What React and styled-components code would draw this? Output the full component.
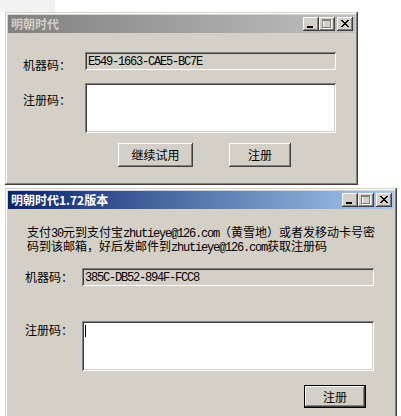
import React from "react";
import styled, { createGlobalStyle } from "styled-components";

const GlobalStyle = createGlobalStyle`
  html, body {
    margin: 0;
    padding: 0;
    background: #fff;
  }
  body {
    font-family: "Noto Sans CJK SC", "Noto Sans", sans-serif;
    font-size: 12px;
    color: #000;
    overflow: hidden;
  }
`;

const Desktop = styled.div`
  width: 401px;
  height: 416px;
  box-sizing: border-box;
  padding: 12px 0 0 5px;
  display: flex;
  flex-direction: column;
  gap: 3px;
  background: linear-gradient(#f2f2f2, #f2f2f2) no-repeat 0 0 / 55px 12px, #fff;
  overflow: hidden;
`;

/* classic raised 3d frame */
const raised = `
  box-shadow: inset -1px -1px #404040, inset 1px 1px #fff,
    inset -2px -2px #808080, inset 2px 2px #d4d0c8;
`;

const Window = styled.div`
  width: ${({ $w }) => $w}px;
  height: ${({ $h }) => $h}px;
  flex-shrink: 0;
  box-sizing: border-box;
  padding: 3px;
  background: #d4d0c8;
  box-shadow: inset -1px -1px #404040, inset 1px 1px #d4d0c8,
    inset -2px -2px #808080, inset 2px 2px #fff;
  display: flex;
  flex-direction: column;
`;

const TitleBar = styled.div`
  height: 18px;
  flex-shrink: 0;
  display: flex;
  align-items: center;
  padding: 0 2px 0 3px;
  background: ${({ $active }) =>
    $active
      ? "linear-gradient(to right, #0a246a, #a6caf0)"
      : "linear-gradient(to right, #808080, #c0c0c0)"};
  color: ${({ $active }) => ($active ? "#fff" : "#d4d0c8")};
`;

const TitleText = styled.span`
  font-weight: 700;
  font-size: 12px;
  line-height: 12px;
  white-space: nowrap;
`;

const CaptionGroup = styled.div`
  margin-left: auto;
  display: flex;
  align-items: center;
`;

const CaptionButton = styled.div`
  width: 16px;
  height: 14px;
  margin-left: ${({ $gap }) => $gap || 0}px;
  background: #d4d0c8;
  ${raised}
  svg {
    display: block;
  }
`;

const MinIcon = () => (
  <svg width="16" height="14" shapeRendering="crispEdges">
    <rect x="4" y="9" width="6" height="2" fill="#000" />
  </svg>
);

const MaxIcon = () => (
  <svg width="16" height="14" shapeRendering="crispEdges">
    <g fill="none" stroke="#fff">
      <rect x="4.5" y="3.5" width="8" height="8" />
    </g>
    <g fill="none" stroke="#808080">
      <rect x="3.5" y="2.5" width="8" height="8" />
      <line x1="3" y1="3.5" x2="12" y2="3.5" />
    </g>
  </svg>
);

const CloseIcon = () => {
  const cells = [];
  for (let i = 0; i < 7; i++) {
    cells.push(<rect key={"a" + i} x={4 + i} y={3 + i} width="2" height="1" />);
    cells.push(<rect key={"b" + i} x={10 - i} y={3 + i} width="2" height="1" />);
  }
  return (
    <svg width="16" height="14" shapeRendering="crispEdges" fill="#000">
      {cells}
    </svg>
  );
};

const Captions = () => (
  <CaptionGroup>
    <CaptionButton>
      <MinIcon />
    </CaptionButton>
    <CaptionButton>
      <MaxIcon />
    </CaptionButton>
    <CaptionButton $gap={2}>
      <CloseIcon />
    </CaptionButton>
  </CaptionGroup>
);

const Body = styled.div`
  flex: 1;
  display: flex;
  flex-direction: column;
  padding: ${({ $pad }) => $pad};
`;

const Form = styled.div`
  display: grid;
  grid-template-columns: ${({ $labelW }) => $labelW}px max-content;
  row-gap: ${({ $rowGap }) => $rowGap}px;
  align-items: start;
  margin-top: ${({ $top }) => $top || 0}px;
`;

const Label = styled.div`
  line-height: 12px;
  padding-top: ${({ $top }) => $top}px;
  white-space: nowrap;
`;

const Field = styled.div`
  width: ${({ $w }) => $w}px;
  height: ${({ $h }) => $h}px;
  box-sizing: border-box;
  padding: 4px 3px;
  background: ${({ $readOnly }) => ($readOnly ? "#d4d0c8" : "#fff")};
  box-shadow: inset 1px 1px #808080, inset -1px -1px #fff,
    inset 2px 2px #404040, inset -2px -2px #d4d0c8;
  font-family: "Liberation Mono", "DejaVu Sans Mono", monospace;
  font-size: 12px;
  line-height: 12px;
  letter-spacing: -1.2px;
  white-space: nowrap;
`;

const Caret = styled.span`
  display: inline-block;
  width: 1px;
  height: 12px;
  background: #000;
  vertical-align: top;
`;

const ButtonRow = styled.div`
  display: flex;
  gap: ${({ $gap }) => $gap || 0}px;
  justify-content: ${({ $end }) => ($end ? "flex-end" : "flex-start")};
  margin-top: ${({ $top }) => $top}px;
  padding: ${({ $pad }) => $pad || 0};
`;

const Button = styled.button`
  width: ${({ $w }) => $w}px;
  height: ${({ $h }) => $h}px;
  box-sizing: border-box;
  padding: 0;
  margin: 0;
  background: #d4d0c8;
  color: #000;
  font-family: "Noto Sans CJK SC", "Noto Sans", sans-serif;
  font-size: 12px;
  line-height: 12px;
  border: ${({ $default }) => ($default ? "1px solid #000" : "none")};
  ${raised}
  cursor: default;
`;

const Desc = styled.div`
  line-height: 12px;
  padding-left: 2px;
  white-space: nowrap;
`;

const Latin = styled.span`
  font-family: "Liberation Mono", "DejaVu Sans Mono", monospace;
  letter-spacing: -1.2px;
`;

export default function App() {
  return (
    <>
      <GlobalStyle />
      <Desktop>
        <Window $w={353} $h={173}>
          <TitleBar>
            <TitleText>明朝时代</TitleText>
            <Captions />
          </TitleBar>
          <Body $pad="19px 0 0 15px">
            <Form $labelW={62} $rowGap={12}>
              <Label $top={7}>机器码：</Label>
              <Field $w={251} $h={18} $readOnly>
                E549-1663-CAE5-BC7E
              </Field>
              <Label $top={11}>注册码：</Label>
              <Field $w={251} $h={50} />
            </Form>
            <ButtonRow $top={10} $gap={36} $pad="0 0 0 95px">
              <Button $w={75} $h={24}>
                继续试用
              </Button>
              <Button $w={62} $h={24}>
                注册
              </Button>
            </ButtonRow>
          </Body>
        </Window>

        <Window $w={392} $h={232}>
          <TitleBar $active>
            <TitleText>明朝时代1.72版本</TitleText>
            <Captions />
          </TitleBar>
          <Body $pad="17px 0 0 17px">
            <Desc>
              支付<Latin>30</Latin>元到支付宝<Latin>zhutieye@126.com</Latin>（黄雪地）或者发移动卡号密
              <br />
              码到该邮箱，好后发邮件到<Latin>zhutieye@126.com</Latin>获取注册码
            </Desc>
            <Form $labelW={57} $rowGap={35} $top={14}>
              <Label $top={3}>机器码：</Label>
              <Field $w={292} $h={18} $readOnly>
                385C-DB52-894F-FCC8
              </Field>
              <Label $top={3}>注册码：</Label>
              <Field $w={292} $h={50}>
                <Caret />
              </Field>
            </Form>
            <ButtonRow $top={14} $end $pad="0 28px 0 0">
              <Button $w={62} $h={23} $default>
                注册
              </Button>
            </ButtonRow>
          </Body>
        </Window>
      </Desktop>
    </>
  );
}
